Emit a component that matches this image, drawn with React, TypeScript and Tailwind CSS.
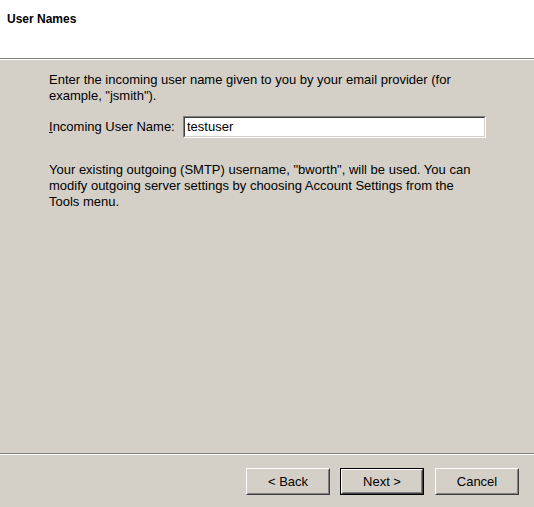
import React from "react";

function Btn({ label, def }: { label: string; def?: boolean }) {
  const inner = (
    <div className="h-full w-full border border-t-white border-l-white border-b-[#404040] border-r-[#404040]">
      <div className="h-full w-full border border-t-[#d4d0c8] border-l-[#d4d0c8] border-b-[#808080] border-r-[#808080] flex items-center justify-center text-[13px] text-black">
        {label}
      </div>
    </div>
  );
  return (
    <div className={"w-[84px] h-[27px] " + (def ? "border border-black" : "")}>{inner}</div>
  );
}

export default function App() {
  return (
    <div
      className="w-[534px] h-[507px] flex flex-col bg-[#d4d0c8] text-black"
      style={{ fontFamily: '"Liberation Sans", Arial, sans-serif' }}
    >
      <div className="h-[58px] bg-white px-[7px] pt-[12px]">
        <div className="text-[12px] font-bold leading-[14px]">User Names</div>
      </div>
      <div className="h-px bg-[#808080]" />
      <div className="h-px bg-white" />
      <div className="flex-1 pl-[49px] pr-[20px] pt-[12px] text-[13px] leading-[16px]">
        <p className="whitespace-nowrap">
          Enter the incoming user name given to you by your email provider (for
          <br />
          example, "jsmith").
        </p>
        <div className="flex items-center mt-[12px] h-[22px]">
          <span className="w-[134px]">
            <span className="underline">I</span>ncoming User Name:
          </span>
          <div className="w-[303px] h-[22px] border border-t-[#808080] border-l-[#808080] border-b-white border-r-white">
            <div className="h-full w-full border border-t-[#404040] border-l-[#404040] border-b-[#d4d0c8] border-r-[#d4d0c8] bg-white flex items-center pl-[2px]">
              testuser
            </div>
          </div>
        </div>
        <p className="mt-[24px] whitespace-nowrap">
          Your existing outgoing (SMTP) username, "bworth", will be used. You can
          <br />
          modify outgoing server settings by choosing Account Settings from the
          <br />
          Tools menu.
        </p>
      </div>
      <div className="h-px bg-[#808080]" />
      <div className="h-px bg-white" />
      <div className="h-[52px] flex items-start justify-end pr-[15px] pt-[13px] gap-[10px]">
        <Btn label="< Back" />
        <Btn label="Next >" def />
        <div className="ml-px">
          <Btn label="Cancel" />
        </div>
      </div>
    </div>
  );
}
